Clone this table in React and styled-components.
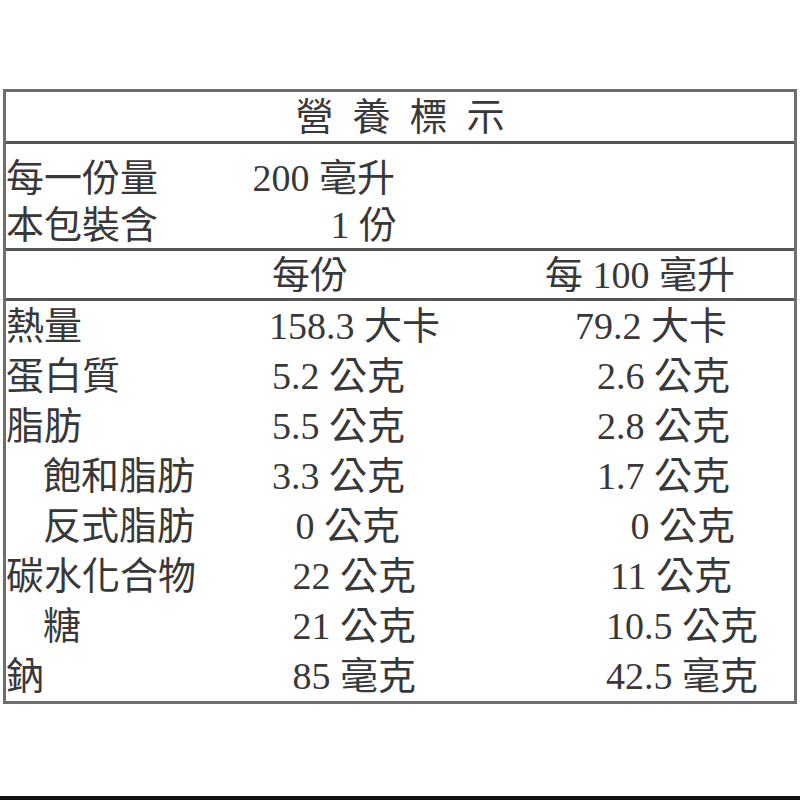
import React from 'react'
import styled, { createGlobalStyle } from 'styled-components'

const serving = [
    { name: '每一份量', value: '200 毫升', pr: 105 },
    { name: '本包裝含', value: '1 份', pr: 103 },
]

const nutrients = [
    { name: '熱量', per: '158.3 大卡', perPr: 60, per100: '79.2 大卡', per100Pr: 67 },
    { name: '蛋白質', per: '5.2 公克', perPr: 95, per100: '2.6 公克', per100Pr: 64 },
    { name: '脂肪', per: '5.5 公克', perPr: 95, per100: '2.8 公克', per100Pr: 64 },
    { name: '飽和脂肪', sub: true, per: '3.3 公克', perPr: 95, per100: '1.7 公克', per100Pr: 64 },
    { name: '反式脂肪', sub: true, per: '0 公克', perPr: 100, per100: '0 公克', per100Pr: 59 },
    { name: '碳水化合物', per: '22 公克', perPr: 84, per100: '11 公克', per100Pr: 62 },
    { name: '糖', sub: true, per: '21 公克', perPr: 84, per100: '10.5 公克', per100Pr: 36 },
    { name: '鈉', per: '85 毫克', perPr: 84, per100: '42.5 毫克', per100Pr: 36 },
]

const App = () => (
    <Page>
        <GlobalStyle />
        <Label>
            <TitleRow>營養標示</TitleRow>
            <ServingBlock>
                {serving.map(({ name, value, pr }) => (
                    <ServingRow key={name}>
                        <Name>{name}</Name>
                        <Value $pr={pr}>{value}</Value>
                    </ServingRow>
                ))}
            </ServingBlock>
            <HeaderRow>
                <Name />
                <Value $pr={152}>每份</Value>
                <Value $pr={59}>每 100 毫升</Value>
            </HeaderRow>
            <NutrientBlock>
                {nutrients.map(({ name, sub, per, perPr, per100, per100Pr }) => (
                    <NutrientRow key={name}>
                        <Name $sub={sub}>{name}</Name>
                        <Value $pr={perPr}>{per}</Value>
                        <Value $pr={per100Pr}>{per100}</Value>
                    </NutrientRow>
                ))}
            </NutrientBlock>
        </Label>
        <BottomBar />
    </Page>
)

const GlobalStyle = createGlobalStyle`
    html, body {
        margin: 0;
        padding: 0;
        background: #ffffff;
    }
    body {
        font-family: "Liberation Serif", "Noto Sans CJK TC", serif;
        color: #383838;
    }
`

const Page = styled.div`
    width: 800px;
    height: 800px;
    display: flex;
    flex-direction: column;
    padding-top: 89px;
    box-sizing: border-box;
    overflow: hidden;
`

const Label = styled.div`
    margin: 0 3px;
    border: 3px solid #6e6e6e;
    display: flex;
    flex-direction: column;
    font-size: 38px;
    line-height: 1;
`

const TitleRow = styled.div`
    height: 49px;
    display: flex;
    align-items: center;
    justify-content: center;
    letter-spacing: 19px;
    padding-left: 19px;
    border-bottom: 3px solid #555;
`

const ServingBlock = styled.div`
    padding-top: 10px;
    height: 94px;
    border-bottom: 3px solid #555;
`

const Grid = styled.div`
    display: grid;
    grid-template-columns: 244px 250px 1fr;
    align-items: center;
`

const ServingRow = styled(Grid)`
    height: 47px;
`

const HeaderRow = styled(Grid)`
    height: 47px;
    border-bottom: 3px solid #555;
`

const NutrientBlock = styled.div`
    display: flex;
    flex-direction: column;
`

const NutrientRow = styled(Grid)`
    height: 50px;
`

const Name = styled.div`
    padding-left: ${props => (props.$sub ? '37px' : '0')};
    white-space: nowrap;
`

const Value = styled.div`
    text-align: right;
    padding-right: ${props => props.$pr}px;
    white-space: nowrap;
`

const BottomBar = styled.div`
    margin-top: auto;
    height: 4px;
    background: #111;
`

export default App
